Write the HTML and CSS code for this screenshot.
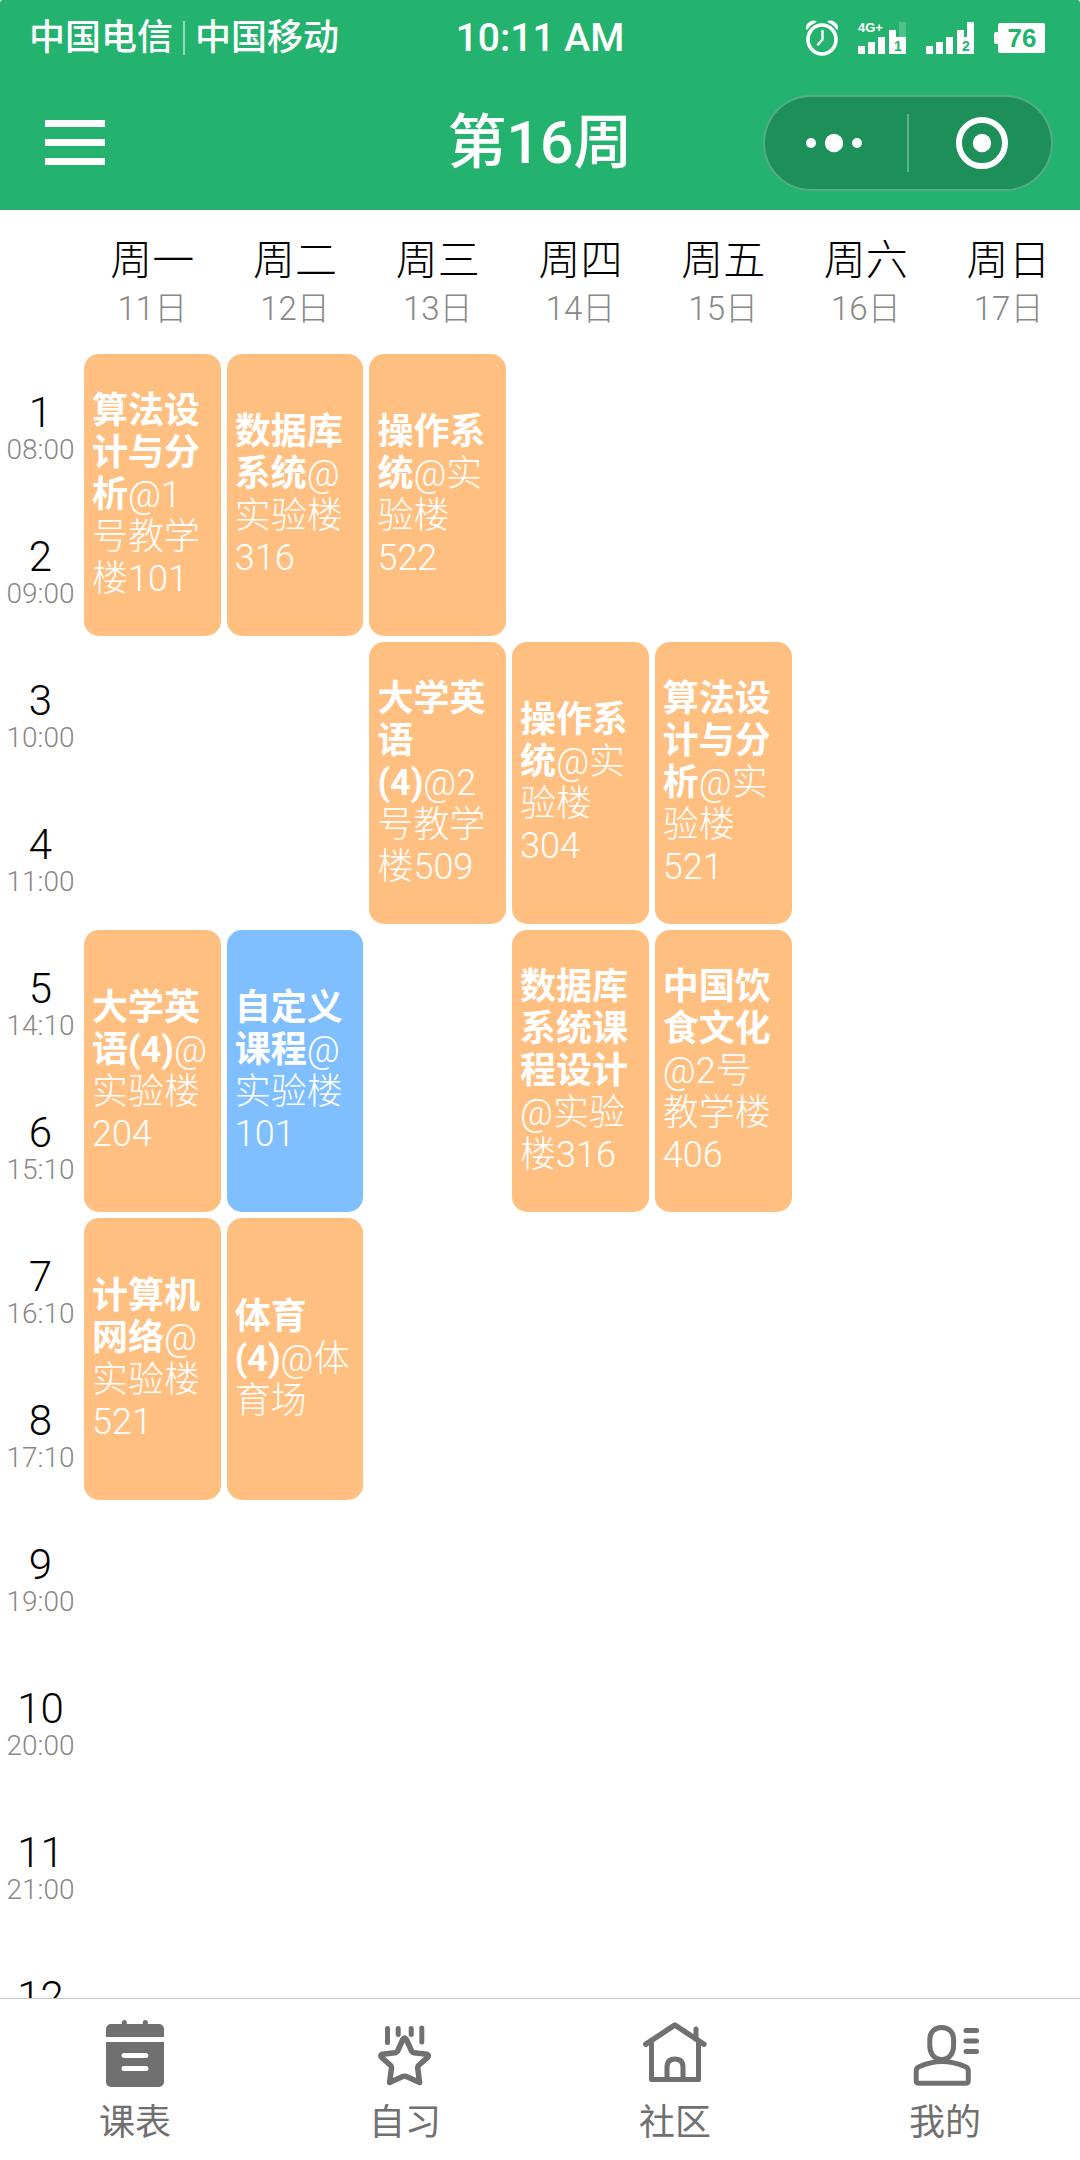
FILE: index.html
```
<!DOCTYPE html>
<html lang="zh-CN">
<head>
<meta charset="utf-8">
<meta name="viewport" content="width=device-width, initial-scale=1">
<title>第16周</title>
<link rel="stylesheet" href="styles.css">
</head>
<body>
<div class="app">
  <header class="top">
    <div class="status">
      <div class="carriers"><span>中国电信</span><span class="carrier-line"></span><span>中国移动</span></div>
      <time class="clock">10:11 AM</time>
      <div class="indicators">
        <svg class="alarm" width="32" height="36" viewBox="0 0 32 36" fill="none" stroke="#fff">
          <path d="M0 9.500V6.500A8 8 0 0 1 10.500 1L10 2.500A16 16 0 0 0 1.500 9.500ZM32 9.500V6.500A8 8 0 0 0 21.500 1L22 2.500A16 16 0 0 1 30.500 9.500Z" fill="#fff" stroke="none"/>
          <ellipse cx="16" cy="19.500" rx="14" ry="14.500" stroke-width="3.600"/>
          <path d="M16.500 11v8.500l-4.500 5" stroke-width="2.400" stroke-linecap="round" stroke-linejoin="round"/>
        </svg>
        <svg width="48" height="34" viewBox="0 0 48 34" fill="#fff">
          <path d="M0 25h7v8H0zM10 21h7v12h-7zM20 16h7v17h-7zM31 9h7v7h10v17H31z"/>
          <path d="M41 1h7v15h-7z" opacity=".2"/>
          <text class="net-type" x="0" y="11">4G+</text>
          <text class="sim" x="36" y="30">1</text>
        </svg>
        <svg width="48" height="34" viewBox="0 0 48 34" fill="#fff">
          <path d="M0 25h7v8H0zM10 21h7v12h-7zM20 16h7v17h-7zM31 9h7v7h3V1h7v32H31z"/>
          <text class="sim" x="36" y="30">2</text>
        </svg>
        <svg width="51" height="32" viewBox="0 0 51 32">
          <path d="M6 1h43a2 2 0 0 1 2 2v26a2 2 0 0 1-2 2H6a2 2 0 0 1-2-2V22H2a2 2 0 0 1-2-2V12a2 2 0 0 1 2-2h2V3a2 2 0 0 1 2-2z" fill="#fff"/>
          <text class="battery" x="28" y="25" text-anchor="middle">76</text>
        </svg>
      </div>
    </div>
    <div class="titlebar">
      <button class="menu" type="button" aria-label="菜单"><span></span><span></span><span></span></button>
      <h1 class="title">第16周</h1>
      <div class="capsule">
        <button type="button" aria-label="更多">
          <svg width="58" height="20" viewBox="0 0 58 20" fill="#fff"><circle cx="6" cy="10" r="5"/><circle cx="29" cy="10" r="9.200"/><circle cx="52" cy="10" r="5"/></svg>
        </button>
        <span class="capsule-line"></span>
        <button type="button" aria-label="关闭">
          <svg width="54" height="54" viewBox="0 0 54 54"><circle cx="27" cy="27" r="23" fill="none" stroke="#fff" stroke-width="6"/><circle cx="27" cy="27" r="9.200" fill="#fff"/></svg>
        </button>
      </div>
    </div>
  </header>

  <main class="board">
    <table class="timetable">
      <thead>
        <tr>
          <td class="hour"></td>
          <th scope="col"><b>周一</b><small>11日</small></th>
          <th scope="col"><b>周二</b><small>12日</small></th>
          <th scope="col"><b>周三</b><small>13日</small></th>
          <th scope="col"><b>周四</b><small>14日</small></th>
          <th scope="col"><b>周五</b><small>15日</small></th>
          <th scope="col"><b>周六</b><small>16日</small></th>
          <th scope="col"><b>周日</b><small>17日</small></th>
        </tr>
      </thead>
      <tbody>
        <tr>
          <th class="hour" scope="row"><b>1</b><small>08:00</small></th>
          <td class="course" rowspan="2"><strong>算法设计与分析</strong>@1号教学楼101</td>
          <td class="course" rowspan="2"><strong>数据库系统</strong>@实验楼316</td>
          <td class="course" rowspan="2"><strong>操作系统</strong>@实验楼522</td>
          <td rowspan="2"></td><td rowspan="2"></td><td rowspan="2"></td><td rowspan="2"></td>
        </tr>
        <tr><th class="hour" scope="row"><b>2</b><small>09:00</small></th></tr>
        <tr>
          <th class="hour" scope="row"><b>3</b><small>10:00</small></th>
          <td rowspan="2"></td><td rowspan="2"></td>
          <td class="course" rowspan="2"><strong>大学英语(4)</strong>@2号教学楼509</td>
          <td class="course" rowspan="2"><strong>操作系统</strong>@实验楼304</td>
          <td class="course" rowspan="2"><strong>算法设计与分析</strong>@实验楼521</td>
          <td rowspan="2"></td><td rowspan="2"></td>
        </tr>
        <tr><th class="hour" scope="row"><b>4</b><small>11:00</small></th></tr>
        <tr>
          <th class="hour" scope="row"><b>5</b><small>14:10</small></th>
          <td class="course" rowspan="2"><strong>大学英语(4)</strong>@实验楼204</td>
          <td class="course custom" rowspan="2"><strong>自定义课程</strong>@实验楼101</td>
          <td rowspan="2"></td>
          <td class="course" rowspan="2"><strong>数据库系统课程设计</strong>@实验楼316</td>
          <td class="course" rowspan="2"><strong>中国饮食文化</strong>@2号教学楼406</td>
          <td rowspan="2"></td><td rowspan="2"></td>
        </tr>
        <tr><th class="hour" scope="row"><b>6</b><small>15:10</small></th></tr>
        <tr>
          <th class="hour" scope="row"><b>7</b><small>16:10</small></th>
          <td class="course" rowspan="2"><strong>计算机网络</strong>@实验楼521</td>
          <td class="course" rowspan="2"><strong>体育(4)</strong>@体育场</td>
          <td rowspan="2"></td><td rowspan="2"></td><td rowspan="2"></td><td rowspan="2"></td><td rowspan="2"></td>
        </tr>
        <tr><th class="hour" scope="row"><b>8</b><small>17:10</small></th></tr>
        <tr><th class="hour" scope="row"><b>9</b><small>19:00</small></th><td colspan="7"></td></tr>
        <tr><th class="hour" scope="row"><b>10</b><small>20:00</small></th><td colspan="7"></td></tr>
        <tr><th class="hour" scope="row"><b>11</b><small>21:00</small></th><td colspan="7"></td></tr>
        <tr><th class="hour" scope="row"><b>12</b><small>&nbsp;</small></th><td colspan="7"></td></tr>
      </tbody>
    </table>
  </main>

  <nav class="tabs">
    <a href="#timetable">
      <svg width="72" height="72" viewBox="0 0 72 72" fill="currentColor">
        <path d="M7 20V12a5 5 0 0 1 5-5H22.800V5.500a2.500 2.500 0 0 1 5 0V7H43.800V5.500a2.500 2.500 0 0 1 5 0V7H60a5 5 0 0 1 5 5V20Z"/>
        <path fill-rule="evenodd" d="M7 25H65V65a5 5 0 0 1-5 5H12a5 5 0 0 1-5-5ZM25 36a2.500 2.500 0 0 0 0 5H47a2.500 2.500 0 0 0 0-5ZM25 49a2.500 2.500 0 0 0 0 5H47a2.500 2.500 0 0 0 0-5Z"/>
      </svg>
      <span>课表</span>
    </a>
    <a href="#study">
      <svg width="72" height="72" viewBox="0 0 72 72" fill="none" stroke="currentColor" stroke-width="5" stroke-linecap="round" stroke-linejoin="round">
        <path d="M18.500 11.500V25.500M29.200 11.500V17.500M42.200 11.500V17.500M52.800 11V25"/>
        <path d="M33.800 22.500Q35.600 19.500 37.400 22.500L42.800 34.500Q43.500 35.500 45 35.800L58 37.200Q60.500 38.500 58.500 40.500L49.500 48.500Q48.500 49.800 48.700 51L50.600 65.500L38 59.800Q35.600 58.600 33.200 59.800L20.600 65.500L22.500 51Q22.700 49.800 21.700 48.500L12.700 40.500Q10.700 38.500 13.200 37.200L26.200 35.800Q27.700 35.500 28.400 34.500Z" stroke-width="5.500"/>
      </svg>
      <span>自习</span>
    </a>
    <a href="#community">
      <svg width="72" height="72" viewBox="0 0 72 72" fill="none" stroke="currentColor" stroke-width="5" stroke-linecap="round" stroke-linejoin="round">
        <path d="M6.800 27.200L35.800 8L65 27.200" stroke-width="5.400"/>
        <path d="M12.500 25V62.500H59.500V25M57 12V22M28 62V50.500Q28 42 36 42T44 50.500V62"/>
      </svg>
      <span>社区</span>
    </a>
    <a href="#me">
      <svg width="72" height="72" viewBox="0 0 72 72" fill="none" stroke="currentColor" stroke-width="5" stroke-linecap="round" stroke-linejoin="round">
        <path d="M32.700 10.500C25.500 10.500 20.800 15.500 20.800 22V29C20.800 36.500 25.500 42.500 32.700 42.500S44.600 36.500 44.600 29V22C44.600 15.500 39.900 10.500 32.700 10.500Z"/>
        <path d="M7.200 54Q7.200 51 10 49.800Q22 44.500 33.200 44.500T56.600 49.800Q59.300 51 59.300 54V63.500Q59.300 66.300 56.500 66.300H10Q7.200 66.300 7.200 63.500Z"/>
        <path d="M57 13.500H67.500M57 24H67.500M57 34.500H67.500"/>
      </svg>
      <span>我的</span>
    </a>
  </nav>
</div>
</body>
</html>
```
FILE: styles.css
```
* {
  box-sizing: border-box;
}

body {
  margin: 0;
  background: #fff;
  color: #000;
  font-family: Roboto, "Noto Sans CJK SC", sans-serif;
  font-weight: 300;
}

button {
  margin: 0;
  padding: 0;
  border: 0;
  background: none;
  font: inherit;
  color: inherit;
  cursor: pointer;
}

svg {
  display: block;
}

.app {
  display: flex;
  flex-direction: column;
  height: 100vh;
}

/* Header */

.top {
  flex: none;
  background: #24b36e;
  color: #fff;
  border-radius: 3px 3px 0 0;
}

.status,
.titlebar {
  display: grid;
  grid-template-columns: 1fr auto 1fr;
  align-items: center;
}

.status {
  height: 75px;
  padding: 0 29px;
  font-size: 36px;
  line-height: 48px;
  font-weight: 500;
}

.carriers {
  display: flex;
  align-items: center;
  gap: 10px;
}

.carrier-line {
  width: 2px;
  height: 34px;
  background: rgba(255, 255, 255, 0.5);
}

.clock {
  font-size: 39px;
}

.indicators {
  display: flex;
  justify-content: flex-end;
  align-items: center;
  gap: 20px;
  padding-right: 6px;
}

.net-type,
.sim,
.battery {
  font-family: "Liberation Sans", sans-serif;
  font-weight: 700;
}

.net-type {
  font-size: 13px;
}

.sim {
  font-size: 14px;
  fill: #24b36e;
}

.battery {
  font-size: 26px;
  fill: #24b36e;
}

.titlebar {
  height: 135px;
  padding: 0 27px;
}

.menu {
  display: flex;
  flex-direction: column;
  gap: 12px;
  width: 60px;
  margin-left: 18px;
}

.menu span {
  height: 7px;
  background: #fff;
}

.title {
  margin: 0;
  font-size: 59px;
  line-height: 72px;
  font-weight: 500;
}

.capsule {
  display: flex;
  align-items: center;
  gap: 4px;
  justify-self: end;
  width: 290px;
  height: 96px;
  border: 2px solid rgba(255, 255, 255, 0.25);
  border-radius: 48px;
  background: #1d8f58;
}

.capsule button {
  flex: 1;
  display: flex;
  justify-content: center;
}

.capsule-line {
  width: 2px;
  height: 58px;
  background: rgba(255, 255, 255, 0.3);
}

/* Timetable */

.board {
  flex: 1;
  min-height: 0;
  overflow: hidden;
}

.timetable {
  width: calc(100% + 6px);
  margin: 0 -3px;
  table-layout: fixed;
  border-collapse: separate;
  border-spacing: 6px;
}

.timetable th,
.timetable td {
  height: 138px;
  padding: 0;
  font-weight: 300;
}

.timetable thead th,
.timetable thead td {
  height: 132px;
  padding-top: 6px;
}

.timetable th b,
.timetable th small {
  display: block;
  font-weight: 300;
}

.timetable thead b {
  font-size: 42px;
  line-height: 48px;
}

.timetable small {
  color: #888;
}

.timetable thead small {
  font-size: 33px;
  line-height: 48px;
}

.timetable .hour {
  width: 75px;
}

.timetable tbody .hour {
  padding-top: 12px;
}

.hour b {
  font-size: 42px;
  line-height: 42px;
}

.hour small {
  font-size: 28px;
  line-height: 32px;
}

.timetable .course {
  padding: 0 8px;
  border-radius: 15px;
  background: #ffbf80;
  color: #fff;
  font-size: 36px;
  line-height: 42px;
  text-align: left;
  vertical-align: middle;
}

.timetable .custom {
  background: #80bfff;
}

.course strong {
  font-weight: 700;
}

/* Bottom tabs */

.tabs {
  flex: none;
  display: grid;
  grid-template-columns: repeat(4, 1fr);
  height: 162px;
  padding-top: 18px;
  border-top: 1px solid #c8c8c8;
}

.tabs a {
  display: flex;
  flex-direction: column;
  align-items: center;
  gap: 8px;
  color: #707070;
  font-size: 36px;
  font-weight: 400;
  line-height: 52px;
  text-decoration: none;
}
```
